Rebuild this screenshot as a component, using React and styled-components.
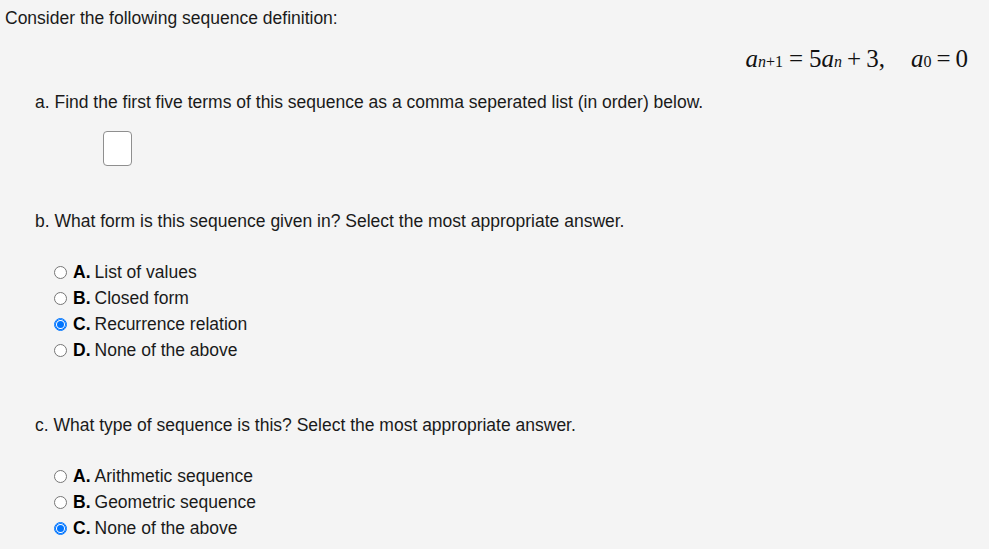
import React from "react";
import styled, { createGlobalStyle } from "styled-components";

const GlobalStyle = createGlobalStyle`
  html, body {
    margin: 0;
    padding: 0;
    background: #f4f4f4;
  }
  body {
    font-family: "Liberation Sans", Arial, sans-serif;
    color: #1a1a1a;
  }
`;

const Page = styled.div`
  width: 989px;
  height: 549px;
  overflow: hidden;
  background: #f4f4f4;
  font-size: 17.5px;
`;

const Intro = styled.div`
  padding: 8px 0 0 5px;
  line-height: 20px;
`;

const MathRow = styled.div`
  display: flex;
  justify-content: flex-end;
  padding: 17px 21px 0 0;
  height: 26px;
`;

const Math = styled.span`
  font-family: "Liberation Serif", serif;
  color: #111;
  white-space: nowrap;
  display: flex;
  align-items: baseline;
`;

const Var = styled.i`
  font-family: "Liberation Serif", serif;
  font-size: 25px;
`;

const Sub = styled.sub`
  font-size: 16px;
  font-style: ${(p) => (p.italic ? "italic" : "normal")};
  font-family: "Liberation Serif", serif;
  vertical-align: -5px;
  line-height: 0;
`;

const Op = styled.span`
  font-family: "Liberation Serif", serif;
  font-size: 25px;
  margin: 0 ${(p) => p.gap || 5}px;
`;

const Num = styled.span`
  font-family: "Liberation Serif", serif;
  font-size: 25px;
`;

const Spacer = styled.span`
  width: ${(p) => p.w}px;
`;

const Section = styled.div`
  padding: ${(p) => p.pad || "0"};
`;

const Question = styled.div`
  padding-left: 35px;
  line-height: 20px;
`;

const AnswerBox = styled.div`
  width: 27px;
  height: 33px;
  margin: 19px 0 0 103px;
  border: 1px solid #8f8f8f;
  border-radius: 4px;
  background: #fff;
`;

const Options = styled.div`
  display: flex;
  flex-direction: column;
  gap: 6px;
  padding: 31px 0 0 54px;
`;

const Option = styled.label`
  display: flex;
  align-items: center;
  height: 20px;
  line-height: 20px;
`;

const Radio = styled.span`
  box-sizing: border-box;
  width: 13px;
  height: 13px;
  border-radius: 50%;
  border: 1px solid ${(p) => (p.checked ? "#0075ff" : "#767676")};
  background: #fff;
  margin-right: 6px;
  display: flex;
  align-items: center;
  justify-content: center;
  &::after {
    content: "";
    display: ${(p) => (p.checked ? "block" : "none")};
    width: 7px;
    height: 7px;
    border-radius: 50%;
    background: #0075ff;
  }
  ${(p) => p.checked && "box-shadow: inset 0 0 0 1px #0075ff;"}
`;

const Letter = styled.b`
  margin-right: 4px;
  color: #000;
`;

const RadioList = ({ items, checked }) => (
  <>
    {items.map((text, i) => {
      const letter = String.fromCharCode(65 + i);
      return (
        <Option key={letter}>
          <Radio checked={i === checked} />
          <Letter>{letter}.</Letter>
          {text}
        </Option>
      );
    })}
  </>
);

export default function App() {
  return (
    <Page>
      <GlobalStyle />
      <Intro>Consider the following sequence definition:</Intro>
      <MathRow>
        <Math>
          <Var>a</Var>
          <Sub italic>n</Sub>
          <Sub>+1</Sub>
          <Op gap={6}>=</Op>
          <Num>5</Num>
          <Var>a</Var>
          <Sub italic>n</Sub>
          <Op gap={5}>+</Op>
          <Num>3,</Num>
          <Spacer w={26} />
          <Var>a</Var>
          <Sub>0</Sub>
          <Op gap={5}>=</Op>
          <Num>0</Num>
        </Math>
      </MathRow>

      <Section pad="21px 0 0 0">
        <Question>
          a. Find the first five terms of this sequence as a comma seperated
          list (in order) below.
        </Question>
        <AnswerBox />
      </Section>

      <Section pad="45px 0 0 0">
        <Question>
          b. What form is this sequence given in? Select the most appropriate
          answer.
        </Question>
        <Options>
          <RadioList
            checked={2}
            items={[
              "List of values",
              "Closed form",
              "Recurrence relation",
              "None of the above",
            ]}
          />
        </Options>
      </Section>

      <Section pad="55px 0 0 0">
        <Question>
          c. What type of sequence is this? Select the most appropriate answer.
        </Question>
        <Options>
          <RadioList
            checked={2}
            items={[
              "Arithmetic sequence",
              "Geometric sequence",
              "None of the above",
            ]}
          />
        </Options>
      </Section>
    </Page>
  );
}
